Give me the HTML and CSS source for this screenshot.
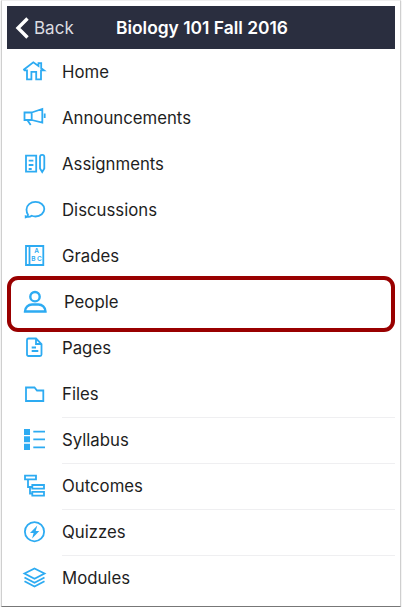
FILE: index.html

```html
<!DOCTYPE html>
<html lang="en">
<head>
  <meta charset="UTF-8">
  <title>Biology 101 Fall 2016</title>
  <link rel="stylesheet" href="styles.css">
</head>
<body>
  <div class="phone-frame">
    <div class="nav-bar">
      <a class="back-link">
        <svg class="back-icon" viewBox="0 0 16 24"><path d="M13.500 2.500 4 12l9.500 9.500"/></svg>
        Back
      </a>
      <h1 class="nav-title">Biology 101 Fall 2016</h1>
    </div>

    <ul class="menu">
      <li class="menu-item">
        <svg class="menu-icon" viewBox="0 0 26 26"><path d="M2 10.500 11.300 3.300l5.200 3.700V4.200h2.700v5l2.800 2.100h-3V20.300h-4.800v-7.500h-4.800v7.500H5V11.300H2.500z"/></svg>
        <span>Home</span>
      </li>
      <li class="menu-item">
        <svg class="menu-icon" viewBox="0 0 26 26"><path d="M2.500 7.500h7.200v7.500H2.500zM9.700 7.500l10.600-3.500v13.700L9.700 15M5.300 15l3.400 5M22.700 8.500v4.500"/></svg>
        <span>Announcements</span>
      </li>
      <li class="menu-item">
        <svg class="menu-icon" viewBox="0 0 26 26"><path d="M4 4.700h10.200v16H4zM6.700 9.700h4.700M6.700 14h4.700M6.700 18h3M18 6a2.100 2.100 0 0 1 4.300 0v11.500L20.200 21 18 17.500z"/></svg>
        <span>Assignments</span>
      </li>
      <li class="menu-item">
        <svg class="menu-icon" viewBox="0 0 26 26"><path d="M3.700 20.400c1.400-.3 2.200-1.300 2.300-2.700C5 16.400 4.500 14.600 4.500 12.500c0-4.300 4-7.600 9-7.600s8.800 3.300 8.800 7.200-3.900 7.400-8.800 7.400c-1.500 0-2.700-.2-3.800-.7-1.300 1-3.700 1.500-6 .6z"/></svg>
        <span>Discussions</span>
      </li>
      <li class="menu-item">
        <svg class="menu-icon" viewBox="0 0 26 26"><path d="M4 3h17.300v19H4zM7.500 3v19"/><text class="grade-text" x="14.500" y="10">A</text><text class="grade-text" x="14.500" y="18">B C</text></svg>
        <span>Grades</span>
      </li>
      <li class="menu-item people-item">
        <svg class="menu-icon people-icon" viewBox="0 0 26 26"><circle cx="13" cy="7.700" r="4.700"/><path d="M3 22.500c0-4.500 3.500-7 7-7h6.500c3.500 0 7 2.500 7 7z"/></svg>
        <span>People</span>
      </li>
      <li class="menu-item">
        <svg class="menu-icon" viewBox="0 0 26 26"><path d="M6.500 3.500h7.500l5.500 5.500v10.500a1.500 1.500 0 0 1-1.500 1.500H6.500A1.500 1.500 0 0 1 5 19.500V5a1.500 1.500 0 0 1 1.500-1.500zM14 3.500V9h5.500M9.700 12.500h4.300M9.700 16h6.600"/></svg>
        <span>Pages</span>
      </li>
      <li class="menu-item">
        <svg class="menu-icon" viewBox="0 0 26 26"><path d="M4 6.500h8.500l2.500 3h6.300V20H4z"/></svg>
        <span>Files</span>
      </li>
      <li class="menu-item">
        <svg class="menu-icon" viewBox="0 0 26 26"><path class="solid" d="M2 2h6v6H2zM2 9.300h6v6H2zM2 16.700h6V23H2z"/><path d="M11.300 4.700H23M11.300 12.300H23M11.300 20.300H23"/></svg>
        <span>Syllabus</span>
      </li>
      <li class="menu-item">
        <svg class="menu-icon" viewBox="0 0 26 26"><path d="M3 2.700h11v3.600H3zM10.300 12H22v3.700H10.300zM10.300 18.900H22v3.700H10.300zM6 6.300V14h4.300M8 14v6.500h2.300"/></svg>
        <span>Outcomes</span>
      </li>
      <li class="menu-item">
        <svg class="menu-icon" viewBox="0 0 26 26"><circle cx="12.500" cy="12.700" r="9.600"/><path class="solid" d="M15.300 6.500 8 14h3.600l-1.500 5.500L17.300 12h-3.600z"/></svg>
        <span>Quizzes</span>
      </li>
      <li class="menu-item">
        <svg class="menu-icon" viewBox="0 0 26 26"><path d="M12.500 3.500 22.500 8.500l-10 5.200-10-5.200zM2.500 12.500l10 5.200 10-5.200M2.500 16.300l10 5.200 10-5.200"/></svg>
        <span>Modules</span>
      </li>
    </ul>

    <div class="callout"></div>
  </div>
</body>
</html>
```

FILE: styles.css

```css
* {
  box-sizing: border-box;
}

body {
  margin: 0;
  background: #fff;
  font-family: "Inter", "Liberation Sans", sans-serif;
  color: #1e1e1e;
}

.phone-frame {
  position: relative;
  width: 400px;
  height: 607px;
  margin-left: 1px;
  padding: 5px 5px 0;
  border: 1px solid #cfcfcf;
  border-top-color: #eee;
  border-bottom-color: #777;
  box-shadow: 0 1px 1px #bbb;
}

.nav-bar {
  display: flex;
  align-items: center;
  height: 43px;
  background: #2a2e3f;
  color: #fff;
}

.back-link {
  display: flex;
  align-items: center;
  gap: 4px;
  width: 109px;
  padding-left: 7px;
  font-size: 17px;
  color: #dcdde1;
}

.back-icon {
  width: 16px;
  height: 24px;
  fill: none;
  stroke: #fff;
  stroke-width: 3.4;
}

.nav-title {
  margin: 0;
  font-size: 17.400px;
  font-weight: 600;
}

.menu {
  list-style: none;
  margin: 0;
  padding: 0;
}

.menu-item {
  position: relative;
  display: flex;
  align-items: center;
  gap: 14px;
  height: 46px;
  padding-left: 15px;
  font-size: 16.750px;
}

.menu-item:nth-child(n+9)::before {
  content: "";
  position: absolute;
  left: 55px;
  right: 0;
  top: 0;
  height: 1px;
  background: #efeff1;
}

.menu-icon {
  flex: none;
  width: 26px;
  height: 26px;
  fill: none;
  stroke: #2dabf2;
  stroke-width: 1.800;
}

.menu-icon .solid {
  fill: #2dabf2;
  stroke: none;
}

.grade-text {
  fill: #2dabf2;
  stroke: none;
  font-size: 6.500px;
  font-weight: 600;
  text-anchor: middle;
}

.people-item {
  gap: 16px;
}

.people-icon {
  stroke-width: 2.400;
}

.callout {
  position: absolute;
  left: 5px;
  top: 275px;
  width: 388px;
  height: 56px;
  border: 4px solid #990000;
  border-radius: 11px;
}
```
